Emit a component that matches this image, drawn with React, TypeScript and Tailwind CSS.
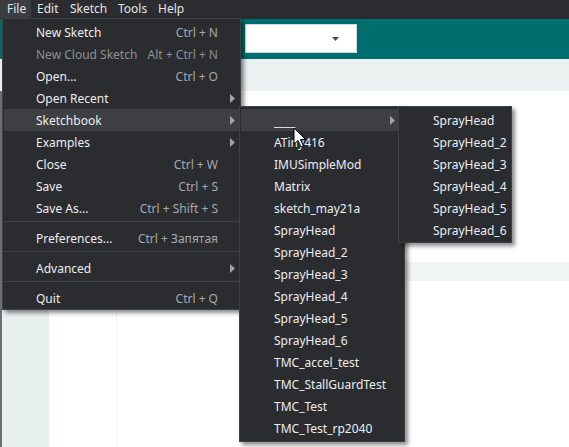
import React from "react";

type Item =
  | { kind: "item"; label: string; shortcut?: string; arrow?: boolean; disabled?: boolean; active?: boolean }
  | { kind: "sep" };

const fileItems: Item[] = [
  { kind: "item", label: "New Sketch", shortcut: "Ctrl + N" },
  { kind: "item", label: "New Cloud Sketch", shortcut: "Alt + Ctrl + N", disabled: true },
  { kind: "item", label: "Open...", shortcut: "Ctrl + O" },
  { kind: "item", label: "Open Recent", arrow: true },
  { kind: "item", label: "Sketchbook", arrow: true, active: true },
  { kind: "item", label: "Examples", arrow: true },
  { kind: "item", label: "Close", shortcut: "Ctrl + W" },
  { kind: "item", label: "Save", shortcut: "Ctrl + S" },
  { kind: "item", label: "Save As...", shortcut: "Ctrl + Shift + S" },
  { kind: "sep" },
  { kind: "item", label: "Preferences...", shortcut: "Ctrl + Запятая" },
  { kind: "sep" },
  { kind: "item", label: "Advanced", arrow: true },
  { kind: "sep" },
  { kind: "item", label: "Quit", shortcut: "Ctrl + Q" },
];

const sketchbook = [
  "ATiny416",
  "IMUSimpleMod",
  "Matrix",
  "sketch_may21a",
  "SprayHead",
  "SprayHead_2",
  "SprayHead_3",
  "SprayHead_4",
  "SprayHead_5",
  "SprayHead_6",
  "TMC_accel_test",
  "TMC_StallGuardTest",
  "TMC_Test",
  "TMC_Test_rp2040",
];

const sprays = ["SprayHead", "SprayHead_2", "SprayHead_3", "SprayHead_4", "SprayHead_5", "SprayHead_6"];

function Arrow() {
  return (
    <svg width="5" height="9" viewBox="0 0 5 9" className="block">
      <path d="M0 0 L5 4.5 L0 9 Z" fill="#a3a3a3" />
    </svg>
  );
}

export default function App() {
  return (
    <div className="relative w-[569px] h-[447px] overflow-hidden bg-white font-['Noto_Sans',sans-serif] text-[12px] leading-none flex flex-col">
      {/* Menu bar */}
      <div className="h-[19px] bg-[#2b2c30] flex items-start text-[#e2e4e6] shrink-0">
        <div className="shrink-0 w-[31px] h-[18px] bg-[#3c3d41] flex items-center pl-[7px]">File</div>
        <div className="shrink-0 w-[39px] h-[18px] flex items-center pl-[6px]">Edit</div>
        <div className="shrink-0 w-[48px] h-[18px] flex items-center">Sketch</div>
        <div className="shrink-0 w-[40px] h-[18px] flex items-center">Tools</div>
        <div className="shrink-0 h-[18px] flex items-center">Help</div>
      </div>
      {/* Teal toolbar */}
      <div className="h-[40px] bg-[#006d6f] shrink-0 pt-[5px] pl-[245px]">
        <div className="w-[112px] h-[29px] bg-white border border-[#d4d8d8] flex items-center justify-end pr-[17px]">
          <svg width="7" height="4" viewBox="0 0 7 4">
            <path d="M0 0 L7 0 L3.5 4 Z" fill="#4a4d50" />
          </svg>
        </div>
      </div>
      {/* Gray strip */}
      <div className="h-[32px] bg-[#ecf1f1] shrink-0" />
      {/* Body */}
      <div className="flex flex-1">
        <div className="w-[49px] bg-[#e9f0f0] border-l-2 border-[#6f7070]" />
        <div className="w-[68px] bg-white border-r border-[#f0f1f1]" />
        <div className="flex-1 flex flex-col">
          <div className="h-[171px]" />
          <div className="h-[19px] bg-[#f3f4f4]" />
        </div>
      </div>

      {/* File menu */}
      <div className="absolute left-[2px] top-[18px] w-[239px] bg-[#2b2c30] border border-[#404145] px-[1px] pt-[2px] shadow-[3px_3px_4px_rgba(0,0,0,0.45)]">
        {fileItems.map((it, i) =>
          it.kind === "sep" ? (
            <div key={i} className="h-[8px] pt-[2px]">
              <div className="h-[1px] bg-[#404145]" />
            </div>
          ) : (
            <div
              key={i}
              className={`h-[22px] flex items-center pl-[32px] pt-[1px] ${it.active ? "bg-[#3e3f43]" : ""}`}
            >
              <span className={`flex-1 ${it.disabled ? "text-[#8c8f93]" : "text-[#eceef0]"}`}>{it.label}</span>
              {it.shortcut && (
                <span className={it.disabled ? "text-[#8c8f93]" : "text-[#a2a9b0]"}>{it.shortcut}</span>
              )}
              <span className="w-[21px] pl-[12px] flex items-center">{it.arrow && <Arrow />}</span>
            </div>
          )
        )}
      </div>

      {/* Sketchbook submenu */}
      <div className="absolute left-[239px] top-[106px] w-[166px] bg-[#2b2c30] border border-[#404145] px-[1px] pt-[2px] pb-[2px] shadow-[3px_3px_4px_rgba(0,0,0,0.45)]">
        <div className="h-[22px] flex items-center pl-[33px] pt-[1px] bg-[#3e3f43]">
          <span className="flex-1 text-[#eceef0] pt-[3px]">____</span>
          <span className="w-[13px] flex items-center">
            <Arrow />
          </span>
        </div>
        {sketchbook.map((s) => (
          <div key={s} className="h-[22px] flex items-center pl-[33px] pt-[1px] text-[#eceef0]">
            {s}
          </div>
        ))}
      </div>

      {/* SprayHead submenu */}
      <div className="absolute left-[398px] top-[106px] w-[114px] bg-[#2b2c30] border border-[#404145] px-[1px] pt-[2px] pb-[1px] shadow-[3px_3px_4px_rgba(0,0,0,0.45)]">
        {sprays.map((s) => (
          <div key={s} className="h-[22px] flex items-center pl-[33px] pt-[1px] text-[#eceef0]">
            {s}
          </div>
        ))}
      </div>

      {/* Mouse cursor */}
      <svg className="absolute left-[293px] top-[127px]" width="14" height="22" viewBox="0 0 14 22">
        <path d="M1 1 L1 17 L5 13.5 L8 20 L10.5 19 L7.5 12.5 L12.5 12.5 Z" fill="white" stroke="black" strokeWidth="1" strokeLinejoin="round" />
      </svg>
    </div>
  );
}
